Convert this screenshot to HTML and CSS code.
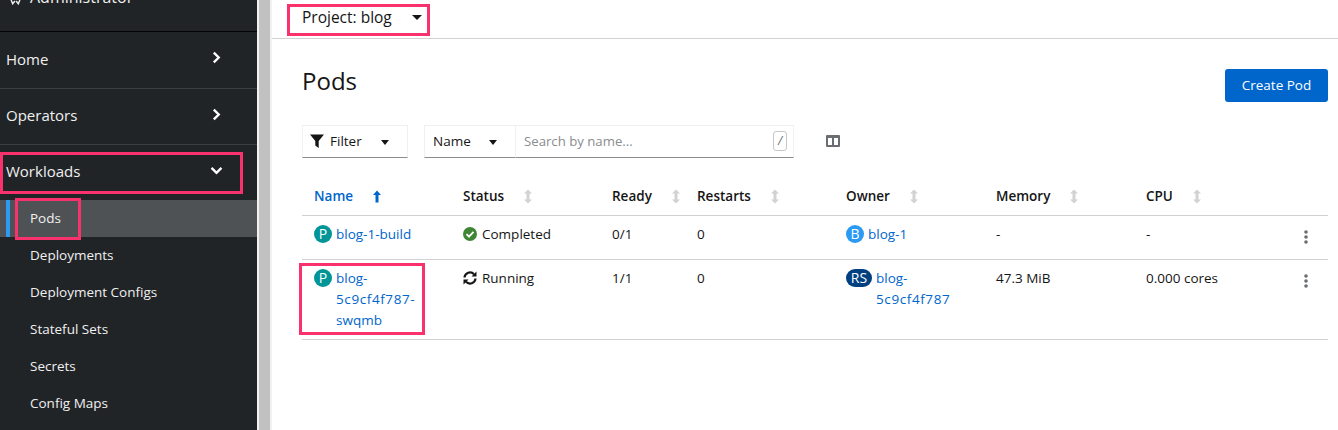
FILE: index.html
```html
<!DOCTYPE html>
<html lang="en">
<head>
<meta charset="utf-8">
<title>Pods</title>
<link rel="stylesheet" href="styles.css">
</head>
<body>
<div class="app">
  <nav class="sidebar">
    <div class="perspective"><svg class="persp-icon" viewBox="0 0 16 8"><path d="M1 0l2.500 6L7 1.500M9 1.500L12.500 6 15 0" fill="none" stroke="#e8e8e8" stroke-width="2.400"/></svg><span>Administrator</span></div>
    <div class="nav-group nav-first"><span>Home</span><svg class="chev" viewBox="0 0 10 14"><path d="M2 1.500l5.500 5.500-5.500 5.500" fill="none" stroke="#fff" stroke-width="2.600"/></svg></div>
    <div class="nav-group"><span>Operators</span><svg class="chev" viewBox="0 0 10 14"><path d="M2 1.500l5.500 5.500-5.500 5.500" fill="none" stroke="#fff" stroke-width="2.600"/></svg></div>
    <div class="nav-group nav-open"><span>Workloads</span><svg class="chev-down" viewBox="0 0 14 10"><path d="M1.500 2l5.500 5.500 5.500-5.500" fill="none" stroke="#fff" stroke-width="2.600"/></svg></div>
    <ul class="nav-sub">
      <li class="current">Pods</li>
      <li>Deployments</li>
      <li>Deployment Configs</li>
      <li>Stateful Sets</li>
      <li>Secrets</li>
      <li>Config Maps</li>
    </ul>
  </nav>
  <div class="scrollbar"></div>
  <main class="main">
    <header class="topbar"><span class="project">Project: blog</span><span class="caret caret-lg"></span></header>
    <div class="title-row">
      <h1>Pods</h1>
      <button class="primary">Create Pod</button>
    </div>
    <div class="toolbar">
      <div class="filter">
        <svg class="funnel" viewBox="0 0 14 14"><path d="M0 .5h14L8.700 7v7L5.300 11.500V7z" fill="#151515"/></svg>
        <span>Filter</span><span class="caret"></span>
      </div>
      <div class="name-select"><span>Name</span><span class="caret"></span></div>
      <div class="search"><span class="placeholder">Search by name...</span><kbd>/</kbd></div>
      <svg class="columns" viewBox="0 0 14 12"><path fill-rule="evenodd" d="M1 0h12a1 1 0 0 1 1 1v10a1 1 0 0 1-1 1H1a1 1 0 0 1-1-1V1a1 1 0 0 1 1-1zM2 3v7h4V3zM8 3v7h4V3z" fill="#6a6e73"/></svg>
    </div>
    <div class="table">
      <div class="thead row">
        <div class="th active">Name<svg class="sort-up" viewBox="0 0 8 12"><path d="M4 0L8 4.500H5.500V12h-3V4.500H0z" fill="#06c"/></svg></div>
        <div class="th">Status<svg class="sort" viewBox="0 0 8 14"><path d="M4 0l4 4H5.500v6H8l-4 4-4-4h2.500V4H0z" fill="#d2d2d2"/></svg></div>
        <div class="th">Ready<svg class="sort" viewBox="0 0 8 14"><path d="M4 0l4 4H5.500v6H8l-4 4-4-4h2.500V4H0z" fill="#d2d2d2"/></svg></div>
        <div class="th">Restarts<svg class="sort" viewBox="0 0 8 14"><path d="M4 0l4 4H5.500v6H8l-4 4-4-4h2.500V4H0z" fill="#d2d2d2"/></svg></div>
        <div class="th">Owner<svg class="sort" viewBox="0 0 8 14"><path d="M4 0l4 4H5.500v6H8l-4 4-4-4h2.500V4H0z" fill="#d2d2d2"/></svg></div>
        <div class="th">Memory<svg class="sort" viewBox="0 0 8 14"><path d="M4 0l4 4H5.500v6H8l-4 4-4-4h2.500V4H0z" fill="#d2d2d2"/></svg></div>
        <div class="th">CPU<svg class="sort" viewBox="0 0 8 14"><path d="M4 0l4 4H5.500v6H8l-4 4-4-4h2.500V4H0z" fill="#d2d2d2"/></svg></div>
        <div class="th"></div>
      </div>
      <div class="row tr r1">
        <div class="td res"><span class="badge teal">P</span><a>blog-1-build</a></div>
        <div class="td res"><svg class="status" viewBox="0 0 14 14"><circle cx="7" cy="7" r="7" fill="#3e8635"/><path d="M3.500 7.200l2.500 2.500 4.500-4.800" fill="none" stroke="#fff" stroke-width="1.800"/></svg><span>Completed</span></div>
        <div class="td">0/1</div>
        <div class="td">0</div>
        <div class="td res"><span class="badge blue">B</span><a>blog-1</a></div>
        <div class="td">-</div>
        <div class="td">-</div>
        <div class="td kebab"><svg viewBox="0 0 4 14"><circle cx="2" cy="2" r="1.800"/><circle cx="2" cy="7" r="1.800"/><circle cx="2" cy="12" r="1.800"/></svg></div>
      </div>
      <div class="row tr r2">
        <div class="td res"><span class="badge teal">P</span><a>blog-<br><span class="hash">5c9cf4f787-</span><br>swqmb</a></div>
        <div class="td res"><svg class="status" viewBox="0 0 14 14"><path d="M1.500 6.500A5.500 5.500 0 0 1 11 3.200M12.500 7.500A5.500 5.500 0 0 1 3 10.800" fill="none" stroke="#151515" stroke-width="2.200"/><path d="M13.500 .5v5h-5zM.5 13.500v-5h5z" fill="#151515"/></svg><span>Running</span></div>
        <div class="td">1/1</div>
        <div class="td">0</div>
        <div class="td res"><span class="badge navy">RS</span><a>blog-<br><span class="hash">5c9cf4f787</span></a></div>
        <div class="td">47.3 MiB</div>
        <div class="td">0.000 cores</div>
        <div class="td kebab"><svg viewBox="0 0 4 14"><circle cx="2" cy="2" r="1.800"/><circle cx="2" cy="7" r="1.800"/><circle cx="2" cy="12" r="1.800"/></svg></div>
      </div>
    </div>
  </main>
</div>
<div class="mark mark-workloads"></div>
<div class="mark mark-pods"></div>
<div class="mark mark-project"></div>
<div class="mark mark-row"></div>
</body>
</html>
```
FILE: styles.css
```css
* { box-sizing: border-box; }
html, body { margin: 0; height: 430px; overflow: hidden; }
body { font-family: "Open Sans", "Liberation Sans", sans-serif; color: #151515; background: #fff; position: relative; }
.app { display: flex; height: 430px; }

.sidebar { width: 257px; flex: none; background: #212427; color: #f0f0f0; overflow: hidden; }
.perspective { height: 32px; border-bottom: 1px solid #030303; display: flex; align-items: flex-start; gap: 8px; padding-left: 9px; font-size: 16px; line-height: 20px; }
.perspective span { margin-top: -13px; }
.persp-icon { width: 13px; height: 5px; }
.nav-group { display: flex; justify-content: space-between; align-items: center; height: 56px; padding: 0 37px 2px 6px; font-size: 15px; border-bottom: 1px solid #3c3f42; }
.nav-group span { margin-bottom: 2px; }
.nav-first { height: 57px; }
.nav-first span { margin-bottom: 0; }
.nav-open { border-bottom: 0; height: 55px; }
.chev { width: 9px; height: 13px; margin-right: -1px; margin-top: -3px; }
.chev-down { width: 13px; height: 9px; margin-right: -3px; margin-top: -3px; }
.nav-sub { list-style: none; margin: 0; padding: 0; font-size: 13.5px; }
.nav-sub li { height: 37px; line-height: 37px; padding-left: 30px; }
.nav-sub .current { background: #4f5255; position: relative; }
.nav-sub .current::before { content: ""; position: absolute; left: 6px; top: 0; bottom: 0; width: 4px; background: #2b9af3; }

.scrollbar { width: 15px; flex: none; background: #c1c1c1; border-left: 2px solid #f1f1f1; border-right: 2px solid #f1f1f1; }

.main { flex: 1; min-width: 0; display: flex; flex-direction: column; }
.topbar { height: 39px; border-bottom: 1px solid #d2d2d2; padding: 0 0 4px 30px; display: flex; align-items: center; font-size: 15.5px; color: #151515; }
.project { width: 110px; }
.title-row { display: flex; justify-content: space-between; padding: 30px 10px 0 30px; height: 86px; }
h1 { margin: -1px 0 0; font-size: 24px; font-weight: 400; line-height: 26px; }
.primary { width: 103px; height: 33px; background: #06c; color: #fff; border: 0; border-radius: 3px; font: 13.5px "Open Sans", "Liberation Sans", sans-serif; padding: 0 0 1px; }

.caret { display: inline-block; width: 0; height: 0; border-left: 4.500px solid transparent; border-right: 4.500px solid transparent; border-top: 5px solid #151515; }
.caret-lg { border-width: 5.500px 5px 0; }

.toolbar { display: flex; height: 33px; margin-left: 30px; font-size: 13.5px; align-items: stretch; }
.filter { width: 106px; display: flex; align-items: center; padding: 0 0 2px 7px; border: 1px solid #f0f0f0; border-bottom: 1px solid #8a8d90; }
.funnel { width: 14px; height: 14px; margin-right: 6px; }
.filter .caret { margin-left: 19px; margin-top: 3px; }
.name-select { margin-left: 16px; width: 92px; display: flex; align-items: center; padding: 0 0 2px 8px; border: 1px solid #f0f0f0; border-bottom: 1px solid #8a8d90; }
.name-select span:first-child { width: 56px; }
.name-select .caret { margin-top: 3px; }
.search { width: 278px; display: flex; align-items: center; justify-content: space-between; padding: 0 6px 2px 8px; border: 1px solid #f0f0f0; border-left: 0; border-bottom: 1px solid #8a8d90; }
.placeholder { color: #8a8d90; font-size: 13.2px; }
kbd { width: 14px; height: 20px; border: 1px solid #c6c7c8; border-radius: 3px; color: #6a6e73; font: italic 12px/18px "Open Sans", sans-serif; text-align: center; }
.columns { width: 14px; height: 12px; margin: 10px 0 0 32px; }

.table { margin: 25px 10px 0 30px; font-size: 13.5px; }
.row { display: grid; grid-template-columns: 149px 149px 85px 149px 150px 150px 138px 56px; border-bottom: 1px solid #d2d2d2; }
.thead { height: 33px; align-items: start; }
.th { padding-left: 12px; font-weight: 600; display: flex; align-items: center; height: 26px; }
.th.active { color: #06c; }
.sort-up { width: 8px; height: 13px; margin-left: 20px; }
.sort { width: 8px; height: 15px; margin-left: 20px; }
.r1 { height: 44px; }
.r2 { height: 80px; }
.td { padding: 8px 0 0 12px; line-height: 21px; min-width: 0; }
.res { display: flex; align-items: flex-start; gap: 4px; }
.res a { color: #06c; }
.hash { letter-spacing: .6px; }
.badge { flex: none; height: 18px; min-width: 18px; padding: 0 3px; border-radius: 9px; color: #fff; font-size: 14px; line-height: 18px; text-align: center; margin-top: 1px; }
.teal { background: #009596; }
.blue { background: #2b9af3; }
.navy { background: #004080; min-width: 26px; }
.status { width: 14px; height: 14px; margin: 3px 1px 0 0; flex: none; }
.kebab { padding: 14px 0 0 8px; }
.kebab svg { width: 4px; height: 14px; fill: #6a6e73; display: block; margin-left: 24px; }

.mark { position: absolute; border: 3px solid #f9316d; }
.mark-workloads { left: 0; top: 152px; width: 243px; height: 42px; }
.mark-pods { left: 15px; top: 198px; width: 66px; height: 42px; }
.mark-project { left: 287px; top: 4px; width: 143px; height: 32px; }
.mark-row { left: 299px; top: 263px; width: 126px; height: 72px; }
```
